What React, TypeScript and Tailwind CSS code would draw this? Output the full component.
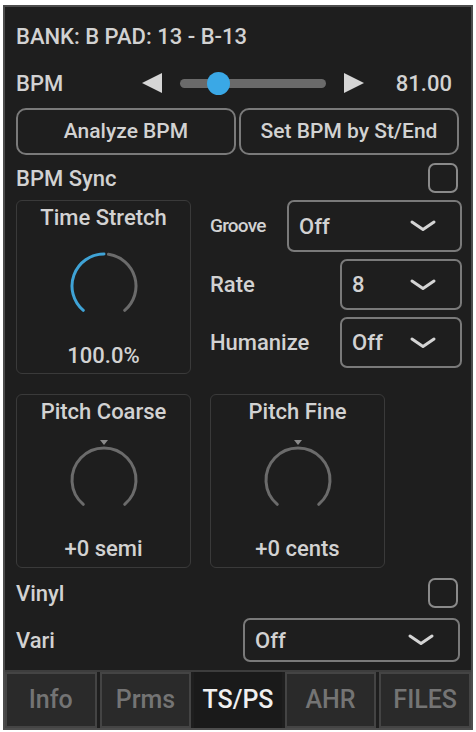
import { useState } from "react";

type KnobProps = { value?: number; marker?: boolean };

// 280° arc knob, start bottom-left, end bottom-right
const Knob = ({ value, marker }: KnobProps) => (
    <svg width="80" height="80" viewBox="0 0 80 80">
        {value !== undefined ? (
            <>
                <path d="M19.3 64.4 A32 32 0 0 1 40 8" fill="none" stroke="#3fa3d6" strokeWidth="3" strokeLinecap="round" />
                <path d="M44.5 8.3 A32 32 0 0 1 60.7 64.4" fill="none" stroke="#6b6b6b" strokeWidth="3" strokeLinecap="round" />
            </>
        ) : (
            <path d="M19.3 64.4 A32 32 0 1 1 60.7 64.4" fill="none" stroke="#6b6b6b" strokeWidth="3" strokeLinecap="round" />
        )}
        {marker && <path d="M36 0 L44 0 L40 5 Z" fill="#8a8a8a" />}
    </svg>
);

const Chevron = () => (
    <svg width="26" height="12" viewBox="0 0 26 12">
        <path d="M2 2 L13 9.5 L24 2" fill="none" stroke="#d4d4d4" strokeWidth="3" strokeLinecap="round" strokeLinejoin="round" />
    </svg>
);

const Dropdown = ({ value, className }: { value: string; className: string }) => (
    <div className={`flex items-center justify-between rounded-[7px] border-2 border-[#7a7a7a] pl-[10px] pr-[24px] ${className}`}>
        <span>{value}</span>
        <Chevron />
    </div>
);

const Checkbox = () => (
    <div className="h-[30px] w-[30px] rounded-[7px] border-2 border-[#8a8a8a]" />
);

const KnobBox = ({ title, value, knob, gap }: { title: string; value: string; knob: React.ReactNode; gap: string }) => (
    <div className="flex h-[174px] w-[175px] flex-col items-center rounded-[6px] border border-[#3a3a3a] pt-[3px]">
        <div className="text-[22px] leading-[28px]">{title}</div>
        <div className="mt-[14px]">{knob}</div>
        <div className={`${gap} text-[22px] leading-[28px]`}>{value}</div>
    </div>
);

const tabs = ["Info", "Prms", "TS/PS", "AHR", "FILES"];

export default function App() {
    const [tab, setTab] = useState("TS/PS");
    return (
        <div className="h-[732px] w-[476px] bg-white pl-[3px] pt-[5px] font-medium" style={{ fontFamily: "Roboto, 'Noto Sans', sans-serif" }}>
            <div className="flex h-[725px] w-[470px] flex-col border-2 border-[#4d4d4d] bg-[#1e1e1e] text-[#d2d2d2]">
                <div className="pl-[11px] pr-[9px]">
                    <div className="mt-[16px] text-[22px] leading-[28px]">BANK: B PAD: 13 - B-13</div>

                    {/* bpm slider */}
                    <div className="mt-[17px] flex h-[30px] items-center">
                        <span className="w-[126px] text-[22px]">BPM</span>
                        <svg width="20" height="20" viewBox="0 0 20 20"><path d="M0 10 L20 0 L20 20 Z" fill="#d6d6d6" /></svg>
                        <div className="relative ml-[18px] h-[9px] w-[146px] rounded-full bg-[#6a6a6a]">
                            <div className="absolute left-[27px] top-[-7px] h-[23px] w-[23px] rounded-full bg-[#3aa8e6]" />
                        </div>
                        <svg className="ml-[18px]" width="20" height="20" viewBox="0 0 20 20"><path d="M0 0 L20 10 L0 20 Z" fill="#d6d6d6" /></svg>
                        <span className="ml-auto pr-[10px] text-[22px]">81.00</span>
                    </div>

                    <div className="mt-[10px] flex gap-[3px]">
                        <button className="h-[47px] w-[220px] rounded-[10px] border-2 border-[#7a7a7a] text-[21px]">Analyze BPM</button>
                        <button className="h-[47px] w-[220px] rounded-[10px] border-2 border-[#7a7a7a] text-[21px]">Set BPM by St/End</button>
                    </div>

                    <div className="mt-[8px] flex h-[30px] items-center justify-between pr-[4px]">
                        <span className="text-[22px]">BPM Sync</span>
                        <Checkbox />
                    </div>

                    <div className="mt-[7px] flex">
                        <KnobBox title="Time Stretch" value="100.0%" knob={<Knob value={100} />} gap="mt-[16px]" />
                        <div className="ml-[19px] flex flex-1 flex-col gap-[7px] text-[22px]">
                            <div className="flex items-center">
                                <span className="w-[77px] text-[19px] tracking-[-0.8px]">Groove</span>
                                <Dropdown value="Off" className="h-[52px] flex-1" />
                            </div>
                            <div className="flex items-center justify-between">
                                <span>Rate</span>
                                <Dropdown value="8" className="h-[51px] w-[122px]" />
                            </div>
                            <div className="flex items-center justify-between">
                                <span>Humanize</span>
                                <Dropdown value="Off" className="h-[51px] w-[122px]" />
                            </div>
                        </div>
                    </div>

                    <div className="mt-[20px] flex gap-[19px]">
                        <KnobBox title="Pitch Coarse" value="+0 semi" knob={<Knob marker />} gap="mt-[15px]" />
                        <KnobBox title="Pitch Fine" value="+0 cents" knob={<Knob marker />} gap="mt-[15px]" />
                    </div>

                    <div className="mt-[10px] flex h-[30px] items-center justify-between pr-[4px]">
                        <span className="text-[22px]">Vinyl</span>
                        <Checkbox />
                    </div>

                    <div className="mt-[10px] flex items-center justify-between pr-[2px]">
                        <span className="text-[22px]">Vari</span>
                        <Dropdown value="Off" className="h-[44px] w-[217px] text-[22px]" />
                    </div>
                </div>

                {/* tab bar */}
                <div className="mt-[8px] flex h-[60px] gap-[3px] border-t-2 border-[#3d3d3d]">
                    {tabs.map((t) => (
                        <button
                            key={t}
                            onClick={() => setTab(t)}
                            className={
                                t === tab
                                    ? "flex-1 bg-[#1a1a1a] text-[25px] text-[#f0f0f0]"
                                    : "flex-1 border-2 border-[#444444] bg-[#2a2a2a] text-[25px] text-[#747474]"
                            }
                        >
                            {t}
                        </button>
                    ))}
                </div>
            </div>
        </div>
    );
}
